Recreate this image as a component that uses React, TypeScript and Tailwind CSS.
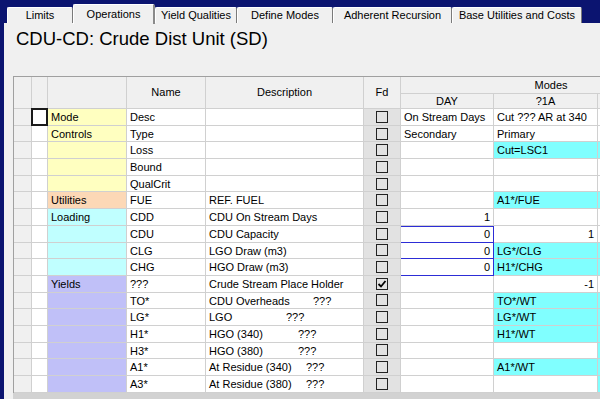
import React from 'react'

type Row = {
  cat?: string
  catBg: string
  name: string
  desc?: string
  descW?: string // width of the description text before the ??? marker
  day?: string
  dayRight?: boolean
  blue?: boolean
  blueTop?: boolean
  a?: string
  aRight?: boolean
  aCyan?: boolean
  edgeCyan?: boolean
  checked?: boolean
  focus?: boolean
}

const YEL = 'bg-[#ffffc0]'
const PEACH = 'bg-[#fcd8b6]'
const LCYAN = 'bg-[#c0ffff]'
const LAV = 'bg-[#c0c0f8]'

const ROWS: Row[] = [
  { cat: 'Mode', catBg: YEL, name: 'Desc', day: 'On Stream Days', a: 'Cut ??? AR at 340', focus: true },
  { cat: 'Controls', catBg: YEL, name: 'Type', day: 'Secondary', a: 'Primary' },
  { catBg: YEL, name: 'Loss', a: 'Cut=LSC1', aCyan: true, edgeCyan: true },
  { catBg: YEL, name: 'Bound' },
  { catBg: YEL, name: 'QualCrit' },
  { cat: 'Utilities', catBg: PEACH, name: 'FUE', desc: 'REF. FUEL', a: 'A1*/FUE', aCyan: true, edgeCyan: true },
  { cat: 'Loading', catBg: LCYAN, name: 'CDD', desc: 'CDU On Stream Days', day: '1', dayRight: true },
  { catBg: LCYAN, name: 'CDU', desc: 'CDU Capacity', day: '0', dayRight: true, blue: true, blueTop: true, a: '1', aRight: true },
  { catBg: LCYAN, name: 'CLG', desc: 'LGO Draw (m3)', day: '0', dayRight: true, blue: true, a: 'LG*/CLG', aCyan: true, edgeCyan: true },
  { catBg: LCYAN, name: 'CHG', desc: 'HGO Draw (m3)', day: '0', dayRight: true, blue: true, a: 'H1*/CHG', aCyan: true, edgeCyan: true },
  { cat: 'Yields', catBg: LAV, name: '???', desc: 'Crude Stream Place Holder', checked: true, a: '-1', aRight: true },
  { catBg: LAV, name: 'TO*', desc: 'CDU Overheads', descW: 'w-[104px]', a: 'TO*/WT', aCyan: true, edgeCyan: true },
  { catBg: LAV, name: 'LG*', desc: 'LGO', descW: 'w-[77px]', a: 'LG*/WT', aCyan: true, edgeCyan: true },
  { catBg: LAV, name: 'H1*', desc: 'HGO (340)', descW: 'w-[89px]', a: 'H1*/WT', aCyan: true, edgeCyan: true },
  { catBg: LAV, name: 'H3*', desc: 'HGO (380)', descW: 'w-[89px]', edgeCyan: true },
  { catBg: LAV, name: 'A1*', desc: 'At Residue (340)', descW: 'w-[97px]', a: 'A1*/WT', aCyan: true, edgeCyan: true },
  { catBg: LAV, name: 'A3*', desc: 'At Residue (380)', descW: 'w-[97px]', edgeCyan: true },
]

const TABS = [
  { label: 'Limits', w: 'w-[66px]' },
  { label: 'Operations', w: 'w-[82px]', active: true },
  { label: 'Yield Qualities', w: 'w-[82px]' },
  { label: 'Define Modes', w: 'w-[96px]' },
  { label: 'Adherent Recursion', w: 'w-[119px]' },
  { label: 'Base Utilities and Costs', w: 'w-[130px]' },
]

function CheckBox({ checked }: { checked?: boolean }) {
  return (
    <div className="w-[12px] h-[12px] border border-[#222] flex items-center justify-center">
      {checked && (
        <svg width="10" height="10" viewBox="0 0 10 10">
          <polyline points="1.5,5 4,7.5 8.5,2" fill="none" stroke="#000" strokeWidth="1.8" />
        </svg>
      )}
    </div>
  )
}

function DataRow({ r }: { r: Row }) {
  const line = 'border-r border-b border-[#d0d0d0]'
  return (
    <div className="flex h-[16.7px] leading-[16px]">
      <div className={`w-[18px] shrink-0 bg-[#f0f0f0] ${line}`} />
      <div className={`w-[16px] shrink-0 bg-white ${line} relative`}>
        {r.focus && <div className="absolute -left-[1px] -top-[1px] w-[17px] h-[18px] border-2 border-[#1a1a1a] bg-white" />}
      </div>
      <div className={`w-[79px] shrink-0 pl-[3px] ${r.catBg} ${line}`}>{r.cat}</div>
      <div className={`w-[79px] shrink-0 pl-[3px] bg-white ${line}`}>{r.name}</div>
      <div className={`w-[158px] shrink-0 pl-[3px] bg-white flex whitespace-nowrap ${line}`}>
        {r.descW ? (
          <>
            <span className={`${r.descW} shrink-0`}>{r.desc}</span>
            <span>???</span>
          </>
        ) : (
          <span>{r.desc}</span>
        )}
      </div>
      <div className={`w-[37px] shrink-0 bg-[#e2e2e2] flex items-center justify-center ${line}`}>
        <CheckBox checked={r.checked} />
      </div>
      <div
        className={`w-[93px] shrink-0 bg-white whitespace-nowrap border-r border-b ${
          r.blue ? 'border-[#2d2dd6]' : 'border-[#d0d0d0]'
        } ${r.dayRight ? 'text-right pr-[3px]' : 'pl-[3px]'} ${r.blueTop ? 'shadow-[inset_0_1px_0_#2d2dd6]' : ''}`}
      >
        {r.day}
      </div>
      <div
        className={`w-[104px] shrink-0 whitespace-nowrap ${r.aCyan ? 'bg-[#80ffff]' : 'bg-white'} ${
          r.aRight ? 'text-right pr-[3px]' : 'pl-[3px]'
        } ${line}`}
      >
        {r.a}
      </div>
      <div className={`w-[104px] shrink-0 ${r.edgeCyan ? 'bg-[#80ffff]' : 'bg-white'} ${line}`} />
    </div>
  )
}

export default function App() {
  return (
    <div className="w-[600px] h-[399px] overflow-hidden bg-[#0b1470] flex flex-col font-['Liberation_Sans',Arial,sans-serif] text-[11px] text-black">
      {/* tab strip */}
      <div className="flex items-end h-[23px] pl-[7px] shrink-0">
        {TABS.map((t) =>
          t.active ? (
            <div
              key={t.label}
              className={`${t.w} h-[20px] -mb-[1px] z-10 bg-[#f0f0f0] border-t border-l border-white border-r-2 border-r-[#8a8a8a] rounded-t-[2px] flex items-start justify-center pt-[3px] leading-[13px]`}
            >
              {t.label}
            </div>
          ) : (
            <div
              key={t.label}
              className={`${t.w} h-[16px] bg-[#f0f0f0] border-t border-l border-white border-r border-r-[#7a7a7a] rounded-t-[2px] flex items-center justify-center leading-[13px] whitespace-nowrap`}
            >
              {t.label}
            </div>
          ),
        )}
      </div>

      {/* panel */}
      <div className="flex-1 ml-[4px] bg-[#f0f0f0] flex flex-col min-h-0">
        <div className="pl-[12px] pt-[5px] text-[18.5px] leading-[21px] whitespace-nowrap">CDU-CD: Crude Dist Unit (SD)</div>

        <div className="mt-[27px] ml-[9px] flex flex-col">
          <div className="border-t border-l border-[#a0a0a0] flex flex-col w-[689px]">
            {/* header */}
            <div className="flex h-[32px] bg-[#f0f0f0]">
              <div className="w-[18px] shrink-0 border-r border-b border-[#d0d0d0]" />
              <div className="w-[16px] shrink-0 border-r border-b border-[#d0d0d0]" />
              <div className="w-[79px] shrink-0 border-r border-b border-[#d0d0d0]" />
              <div className="w-[79px] shrink-0 border-r border-b border-[#d0d0d0] flex items-center justify-center">Name</div>
              <div className="w-[158px] shrink-0 border-r border-b border-[#d0d0d0] flex items-center justify-center">Description</div>
              <div className="w-[37px] shrink-0 border-r border-b border-[#d0d0d0] flex items-center justify-center">Fd</div>
              <div className="flex flex-col w-[301px] shrink-0">
                <div className="h-[17px] border-r border-b border-[#d0d0d0] flex items-center justify-center">Modes</div>
                <div className="flex h-[15px] leading-[14px]">
                  <div className="w-[93px] shrink-0 border-r border-b border-[#d0d0d0] text-center">DAY</div>
                  <div className="w-[104px] shrink-0 border-r border-b border-[#d0d0d0] text-center">?1A</div>
                  <div className="w-[104px] shrink-0 border-r border-b border-[#d0d0d0]" />
                </div>
              </div>
            </div>
            {ROWS.map((r, i) => (
              <DataRow key={i} r={r} />
            ))}
          </div>
          <div className="h-[10px] bg-[#d2d2d2] w-[600px]" />
        </div>
      </div>
    </div>
  )
}
